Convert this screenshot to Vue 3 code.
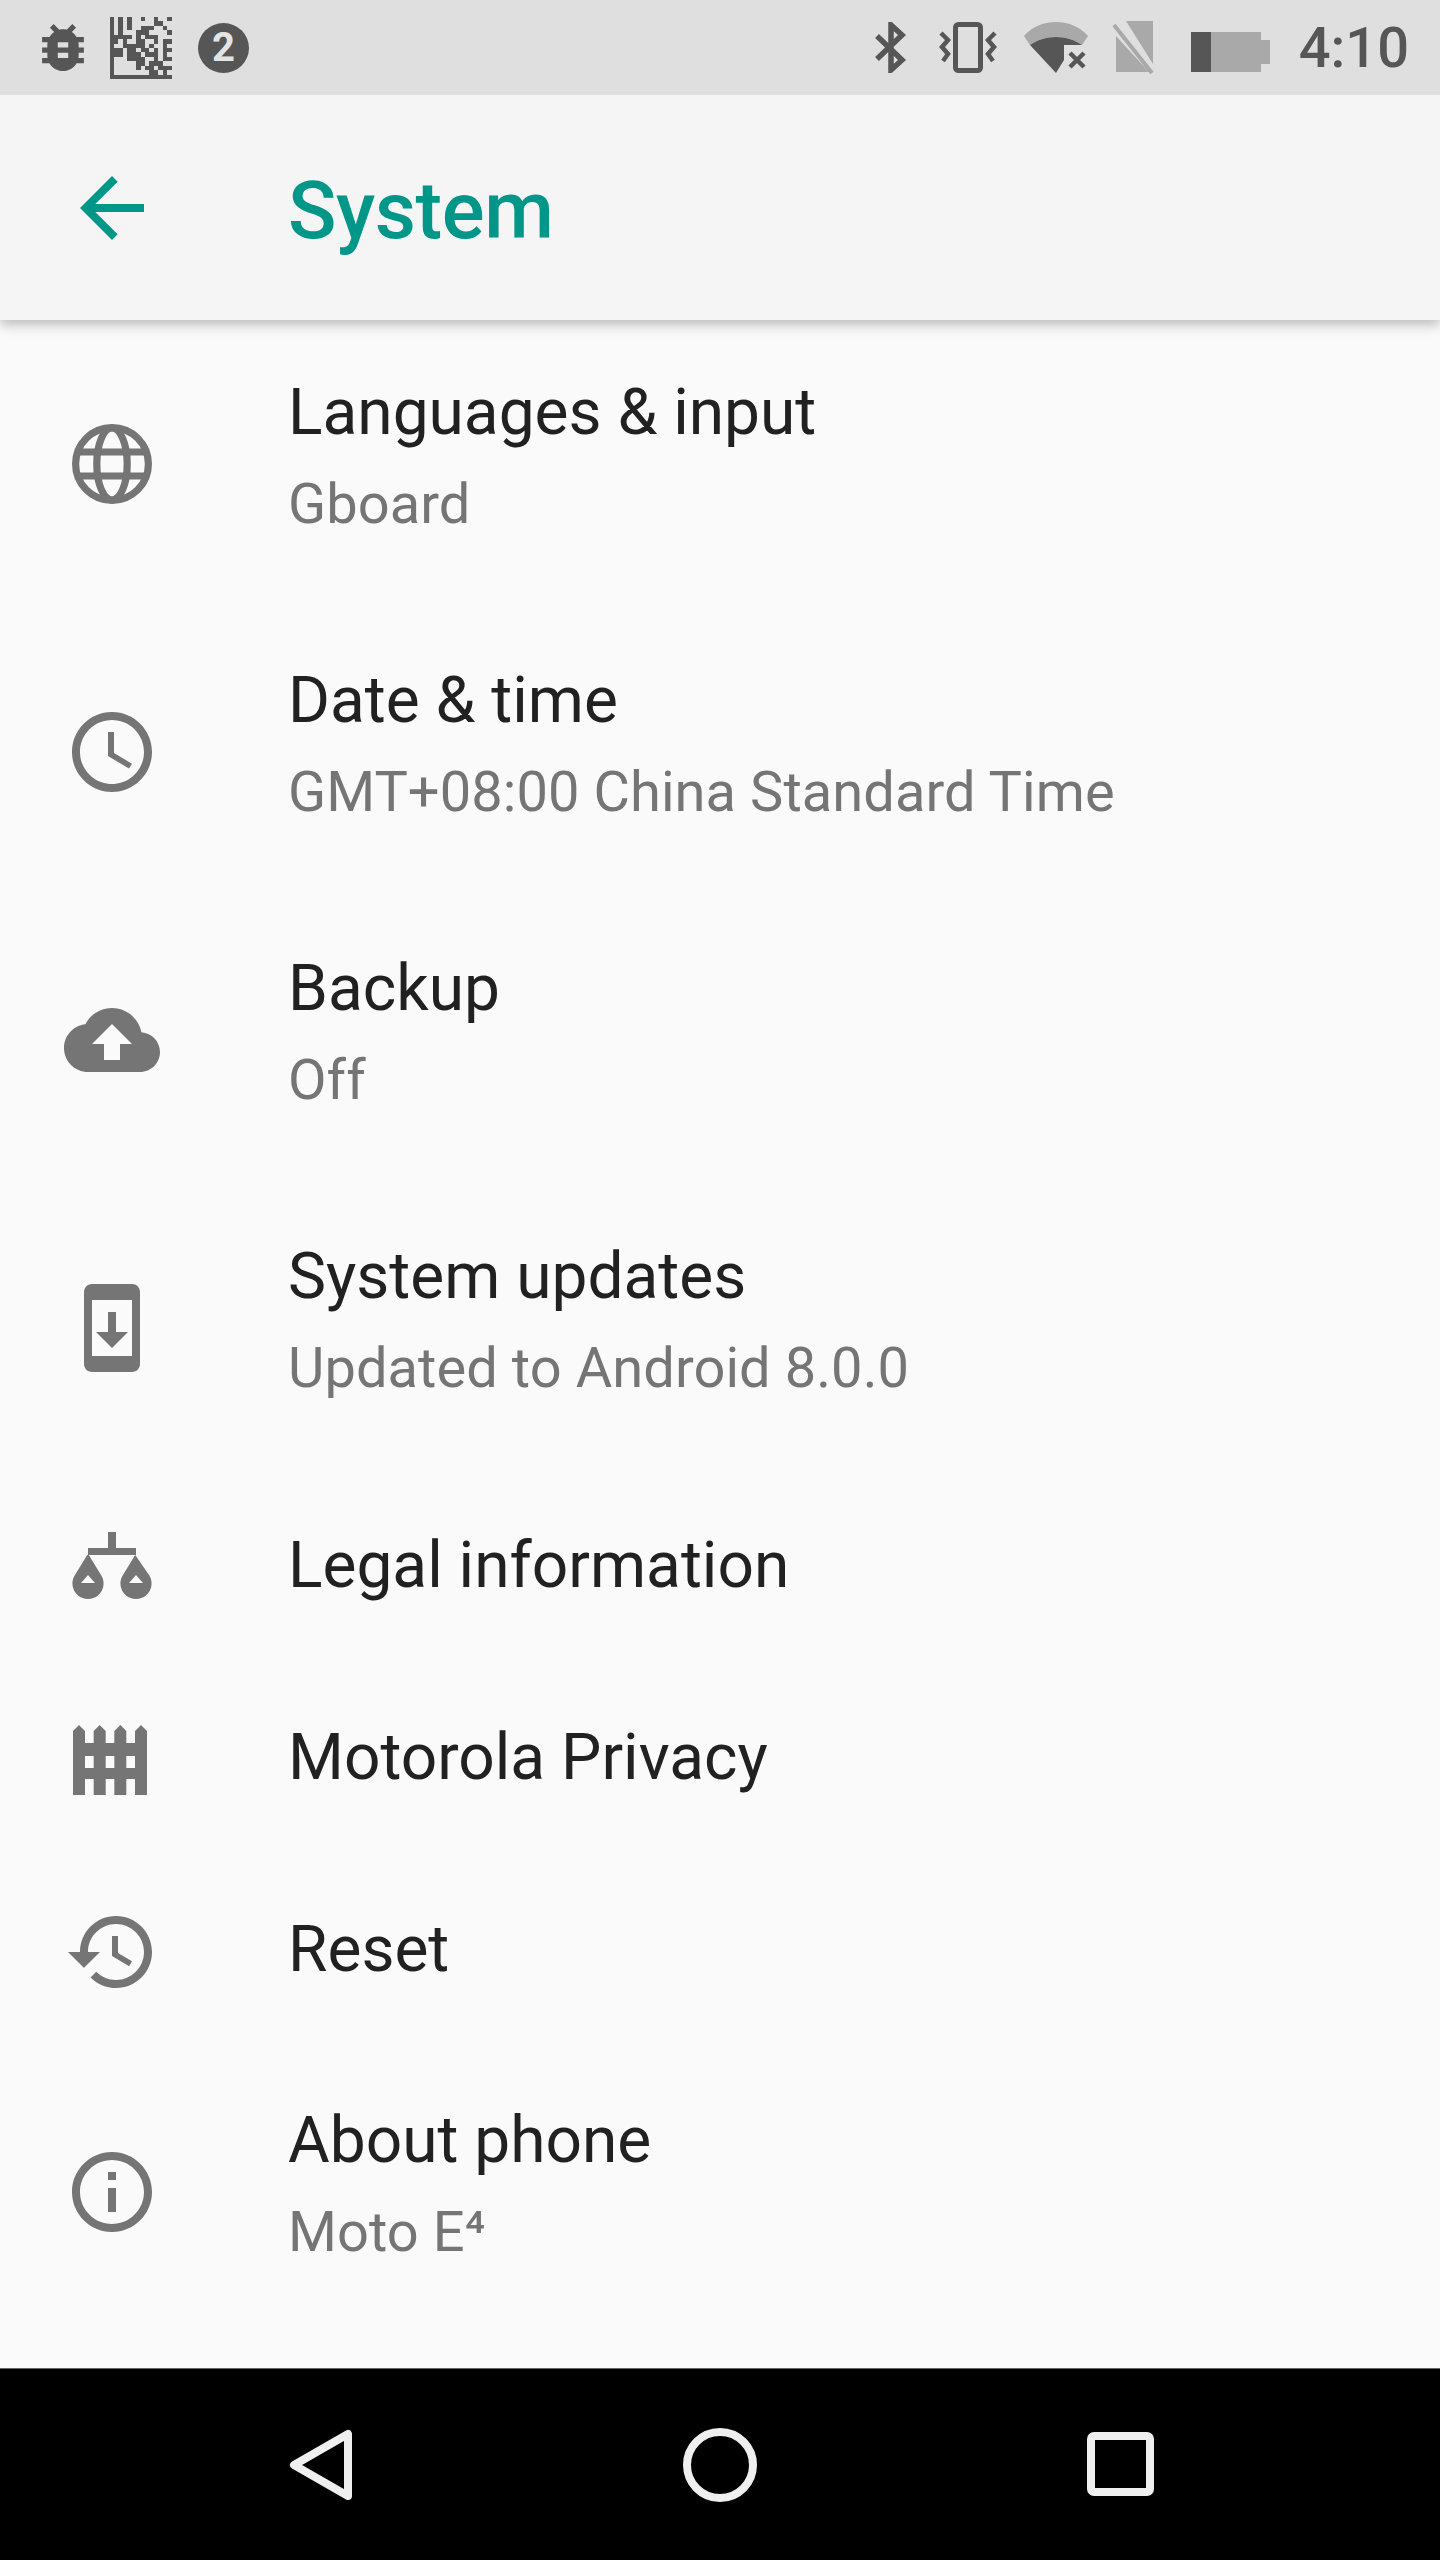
<script setup>
const icons = {
  clock: 'M11.99 2C6.47 2 2 6.48 2 12s4.47 10 9.99 10C17.52 22 22 17.52 22 12S17.52 2 11.99 2zM12 20c-4.42 0-8-3.58-8-8s3.58-8 8-8 8 3.58 8 8-3.58 8-8 8zM12.5 7H11v6l5.25 3.15.75-1.23-4.5-2.67z',
  cloud: 'M19.35 10.04C18.67 6.59 15.64 4 12 4 9.11 4 6.6 5.64 5.35 8.04 2.34 8.36 0 10.91 0 14c0 3.31 2.69 6 6 6h13c2.76 0 5-2.24 5-5 0-2.64-2.05-4.78-4.65-4.96zM14 13v4h-4v-4H7l5-5 5 5h-3z',
  update: 'M17 1.01L7 1c-1.1 0-2 .9-2 2v18c0 1.1.9 2 2 2h10c1.1 0 2-.9 2-2V3c0-1.1-.9-1.99-2-1.99zM17 19H7V5h10v14zm-1-6h-3V8h-2v5H8l4 4 4-4z',
  reset: 'M13 3c-4.97 0-9 4.03-9 9H1l3.89 3.89.07.14L9 12H6c0-3.87 3.13-7 7-7s7 3.13 7 7-3.13 7-7 7c-1.93 0-3.68-.79-4.94-2.06l-1.42 1.42C8.27 19.99 10.51 21 13 21c4.97 0 9-4.03 9-9s-4.03-9-9-9zm-1 5v5l4.28 2.54.72-1.21-3.5-2.08V8H12z',
  info: 'M11 7h2v2h-2zm0 4h2v6h-2zm1-9C6.48 2 2 6.48 2 12s4.48 10 10 10 10-4.48 10-10S17.52 2 12 2zm0 18c-4.41 0-8-3.59-8-8s3.59-8 8-8 8 3.59 8 8-3.59 8-8 8z',
  fence: 'M2.25 20.75V4.75l1.5-1.5 1.5 1.5v3h2.17v-3l1.5-1.5 1.5 1.5v3h2.16v-3l1.5-1.5 1.5 1.5v3h2.17v-3l1.5-1.5 1.5 1.5v16h-3v-4h-2.17v4h-3v-4h-2.16v4h-3v-4H5.25v4h-3zM5.25 11v3h2.17v-3zM10.42 11v3h2.16v-3zM15.58 11v3h2.17v-3z',
  legal: 'M11 3h2v4h5v1.75h-.2l3.5 5.05A3.9 3.9 0 1 1 14.7 13.8l3.1-5.05H6.2l3.1 5.05A3.9 3.9 0 1 1 2.7 13.8l3.1-5.05H6V7h5zM6 13.75l-1.75 2h3.5zM18 13.75l-1.75 2h3.5z'
}
const rows = [
  { icon: 'globe', title: 'Languages & input', sub: 'Gboard' },
  { icon: 'clock', title: 'Date & time', sub: 'GMT+08:00 China Standard Time' },
  { icon: 'cloud', title: 'Backup', sub: 'Off' },
  { icon: 'update', title: 'System updates', sub: 'Updated to Android 8.0.0' },
  { icon: 'legal', title: 'Legal information' },
  { icon: 'fence', title: 'Motorola Privacy' },
  { icon: 'reset', title: 'Reset' },
  { icon: 'info', title: 'About phone', sub: 'Moto E⁴' }
]
const matrix = [
  '10101001001001',
  '10101000001100',
  '10101001110010',
  '10100011100001',
  '11111010111000',
  '11010011001011',
  '10011111010010',
  '11101101101011',
  '11101110111010',
  '10001111001011',
  '10000011011100',
  '10000010110111',
  '10000000011010',
  '11111111111111'
]
const cells = []
matrix.forEach((line, y) => {
  ;[...line].forEach((c, x) => {
    if (c === '1') cells.push({ x, y })
  })
})
</script>

<template>
  <div class="phone">
    <header class="status">
      <div class="status-left">
        <svg class="bug" viewBox="4 3 16 18">
          <path d="M20 8h-2.81c-.45-.78-1.07-1.45-1.82-1.96L17 4.41 15.59 3l-2.17 2.17C12.96 5.06 12.49 5 12 5c-.49 0-.96.06-1.41.17L8.41 3 7 4.41l1.62 1.63C7.88 6.55 7.26 7.22 6.81 8H4v2h2.09c-.05.33-.09.66-.09 1v1H4v2h2v1c0 .34.04.67.09 1H4v2h2.81c1.04 1.79 2.97 3 5.19 3s4.15-1.21 5.19-3H20v-2h-2.09c.05-.33.09-.66.09-1v-1h2v-2h-2v-1c0-.34-.04-.67-.09-1H20V8zm-6 8h-4v-2h4v2zm0-4h-4v-2h4v2z" fill="#565656" />
        </svg>
        <svg class="qr" viewBox="0 0 14 14" shape-rendering="crispEdges">
          <rect v-for="(c, i) in cells" :key="i" :x="c.x" :y="c.y" width="1" height="1" fill="#565656" />
        </svg>
        <div class="badge">2</div>
      </div>
      <div class="status-right">
        <svg class="s-bt" viewBox="0 0 33 51"><path d="M3 14l25 24-11 10V3l11 10L3 37" fill="none" stroke="#565656" stroke-width="5.5" stroke-linejoin="miter" /></svg>
        <svg class="s-vib" viewBox="0 0 60 51">
          <rect x="17.5" y="2.5" width="25" height="46" rx="3" fill="none" stroke="#565656" stroke-width="5" />
          <path d="M3 11l7 7-6 7 6 7-5 7M57 11l-7 7 6 7-6 7 5 7" fill="none" stroke="#565656" stroke-width="4.5" />
        </svg>
        <svg class="s-wifi" viewBox="0 0 64 51">
          <path d="M0 14C8 5 19 0 32 0s24 5 32 14l-6 9C51 18 42 15 32 15S13 18 6 23z" fill="#a9a9a9" />
          <path d="M6 23C13 18 22 15 32 15s19 3 26 8H40v15L32 51z" fill="#565656" />
          <path d="M46 31l14 14M60 31L46 45" stroke="#565656" stroke-width="4.5" />
        </svg>
        <svg class="s-sim" viewBox="0 0 44 54">
          <path d="M14 0h27v43zM4 15v36h33z" fill="#a9a9a9" />
          <path d="M2 4l38 48" stroke="#a9a9a9" stroke-width="4" />
        </svg>
        <div class="battery"><span class="batt-fill"></span><span class="batt-rest"></span><span class="batt-tip"></span></div>
        <span class="time">4:10</span>
      </div>
    </header>

    <div class="appbar">
      <svg class="icon" viewBox="0 0 24 24"><path d="M20 11H7.83l5.59-5.59L12 4l-8 8 8 8 1.41-1.41L7.83 13H20z" fill="#009688" /></svg>
      <h1 class="appbar-title">System</h1>
    </div>

    <main class="list">
      <section v-for="r in rows" :key="r.title" class="row" :class="{ tall: r.sub }">
        <svg class="icon" viewBox="0 0 24 24">
          <template v-if="r.icon === 'globe'">
            <circle cx="12" cy="12" r="9.1" fill="none" stroke="#757575" stroke-width="1.8" />
            <ellipse cx="12" cy="12" rx="3.8" ry="9" fill="none" stroke="#757575" stroke-width="1.8" />
            <path d="M3.5 9h17M3.5 15h17" stroke="#757575" stroke-width="1.7" />
          </template>
          <path v-else :d="icons[r.icon]" fill="#757575" fill-rule="evenodd" />
        </svg>
        <div class="text">
          <div class="title">{{ r.title }}</div>
          <div v-if="r.sub" class="sub">{{ r.sub }}</div>
        </div>
      </section>
    </main>

    <nav class="navbar">
      <svg class="nav-back" viewBox="0 0 64 76"><path d="M59 7v62L5 38z" fill="none" stroke="#efefef" stroke-width="8" stroke-linejoin="round" /></svg>
      <svg class="nav-home" viewBox="0 0 76 76"><circle cx="38" cy="38" r="33" fill="none" stroke="#efefef" stroke-width="8" /></svg>
      <svg class="nav-recent" viewBox="0 0 67 64"><rect x="4" y="4" width="59" height="56" rx="3" fill="none" stroke="#efefef" stroke-width="8" /></svg>
    </nav>
  </div>
</template>

<style>
body { margin: 0; background: #fafafa; }
</style>

<style scoped>
.phone {
  width: 1440px;
  height: 2560px;
  display: flex;
  flex-direction: column;
  background: #fafafa;
  font-family: Roboto, "Liberation Sans", sans-serif;
  overflow: hidden;
}
.status {
  height: 95px;
  flex: none;
  background: #dfdfdf;
  display: flex;
  align-items: center;
  justify-content: space-between;
  padding: 0 31px 0 42px;
  position: relative;
  z-index: 2;
}
.status-left, .status-right { display: flex; align-items: center; }
.bug { width: 42px; height: 47px; margin-right: 25px; }
.qr { width: 63px; height: 62px; margin-right: 26px; }
.badge {
  width: 51px;
  height: 50px;
  border-radius: 50%;
  background: #565656;
  color: #e4e4e4;
  font-size: 40px;
  font-weight: 700;
  line-height: 50px;
  text-align: center;
}
.s-bt { width: 33px; height: 51px; margin-right: 31px; }
.s-vib { width: 60px; height: 51px; margin-right: 26px; }
.s-wifi { width: 64px; height: 51px; margin-right: 24px; }
.s-sim { width: 44px; height: 54px; margin-right: 35px; }
.battery { display: flex; align-items: center; height: 40px; margin-right: 29px; margin-top: 8px; }
.batt-fill { width: 20px; height: 40px; background: #565656; }
.batt-rest { width: 50px; height: 40px; background: #a9a9a9; }
.batt-tip { width: 9px; height: 24px; background: #a9a9a9; }
.time { font-size: 56px; font-weight: 500; color: #565656; line-height: 56px; }
.appbar {
  height: 225px;
  flex: none;
  background: #f5f5f5;
  display: flex;
  align-items: center;
  padding-left: 64px;
  box-shadow: 0 4px 12px rgba(0, 0, 0, 0.28);
  position: relative;
  z-index: 1;
}
.icon { width: 96px; height: 96px; flex: none; }
.appbar-title {
  margin: 6px 0 0 128px;
  font-size: 80px;
  font-weight: 500;
  letter-spacing: -0.4px;
  color: #009688;
  line-height: 96px;
}
.list { flex: 1; }
.row {
  height: 192px;
  display: flex;
  align-items: center;
  padding-left: 64px;
}
.row.tall { height: 288px; }
.text { margin-left: 128px; }
.title { font-size: 64px; line-height: 88px; color: #212121; margin-bottom: 4px; }
.sub { font-size: 56px; line-height: 76px; letter-spacing: 0.07px; color: #757575; margin-top: 9px; margin-bottom: 17px; }
.navbar {
  height: 192px;
  flex: none;
  background: #000;
  border-top: 1px solid #666;
  box-sizing: border-box;
  display: flex;
  align-items: center;
}
.nav-back { width: 64px; height: 76px; margin-left: 289px; }
.nav-home { width: 76px; height: 76px; margin-left: 329px; }
.nav-recent { width: 67px; height: 64px; margin-left: 329px; margin-bottom: 2px; }
</style>
